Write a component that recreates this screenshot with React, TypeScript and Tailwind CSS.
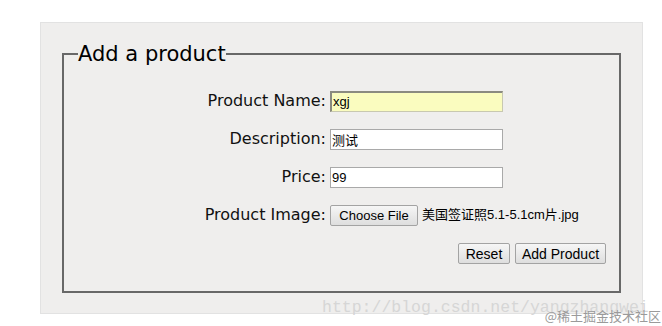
const fields = [
  { label: 'Product Name:', value: 'xgj', autofill: true },
  { label: 'Description:', value: '测试', autofill: false },
  { label: 'Price:', value: '99', autofill: false },
]

export default function App() {
  return (
    <div className="relative w-[662px] h-[326px] bg-white overflow-hidden">
      <div className="ml-[40px] mt-[22px] w-[603px] h-[292px] bg-[#efeeed] border border-[#e2e2e2] px-[21px] pt-[19px]">
        <fieldset className="border-2 border-[#686868] h-[251px] w-[559px] font-['DejaVu_Sans',sans-serif]">
          <legend className="ml-[14px] text-[21px] leading-[24px] text-black">Add a product</legend>

          {/* Text inputs */}
          <div className="flex flex-col gap-[18px] pt-[25px]">
            {fields.map((f) => (
              <div key={f.label} className="flex items-center h-[20px]">
                <label className="w-[266px] pr-[4px] text-right text-[16px] text-[#111]">{f.label}</label>
                <input
                  readOnly
                  value={f.value}
                  className={
                    f.autofill
                      ? "w-[173px] h-[21px] pl-[1px] text-[13px] font-['Liberation_Sans','Noto_Sans_CJK_SC',sans-serif] text-black bg-[#fafcbf] border border-[#c8c8b0] border-t-[#8a8a80] border-l-[#8a8a80] border-t-2 border-l-2 outline-none"
                      : "w-[173px] h-[21px] pl-[1px] text-[13px] font-['Liberation_Sans','Noto_Sans_CJK_SC',sans-serif] text-black bg-white border border-[#a9a9a9] outline-none"
                  }
                />
              </div>
            ))}

            {/* File input */}
            <div className="flex items-center h-[20px]">
              <label className="w-[266px] pr-[4px] text-right text-[16px] text-[#111]">Product Image:</label>
              <button className="h-[21px] w-[88px] text-[13px] font-['Liberation_Sans',sans-serif] text-black bg-gradient-to-b from-[#f6f6f6] to-[#dedede] border border-[#a3a3a3] rounded-[2px]">
                Choose File
              </button>
              <span className="ml-[4px] text-[13px] font-['Liberation_Sans','Noto_Sans_CJK_SC',sans-serif] text-black">
                美国签证照5.1-5.1cm片.jpg
              </span>
            </div>
          </div>

          {/* Actions */}
          <div className="flex justify-end gap-[5px] pr-[13px] mt-[18px]">
            <button className="h-[21px] w-[52px] text-[14px] font-['Liberation_Sans',sans-serif] text-black bg-gradient-to-b from-[#f6f6f6] to-[#dedede] border border-[#a3a3a3] rounded-[2px]">
              Reset
            </button>
            <button className="h-[21px] w-[91px] text-[14px] font-['Liberation_Sans',sans-serif] text-black bg-gradient-to-b from-[#f6f6f6] to-[#dedede] border border-[#a3a3a3] rounded-[2px]">
              Add Product
            </button>
          </div>
        </fieldset>
      </div>

      {/* Watermarks */}
      <div className="absolute left-[322px] top-[296px] text-[16.5px] leading-[24px] text-[#d6d6d6] font-['Liberation_Mono',monospace] whitespace-nowrap">
        http://blog.csdn.net/yangzhangwei
      </div>
      <div className="absolute right-[1px] top-[307px] text-[13px] leading-[17px] text-[#9a9a9a] font-['Noto_Sans_CJK_SC',sans-serif] whitespace-nowrap">
        @稀土掘金技术社区
      </div>
    </div>
  )
}
